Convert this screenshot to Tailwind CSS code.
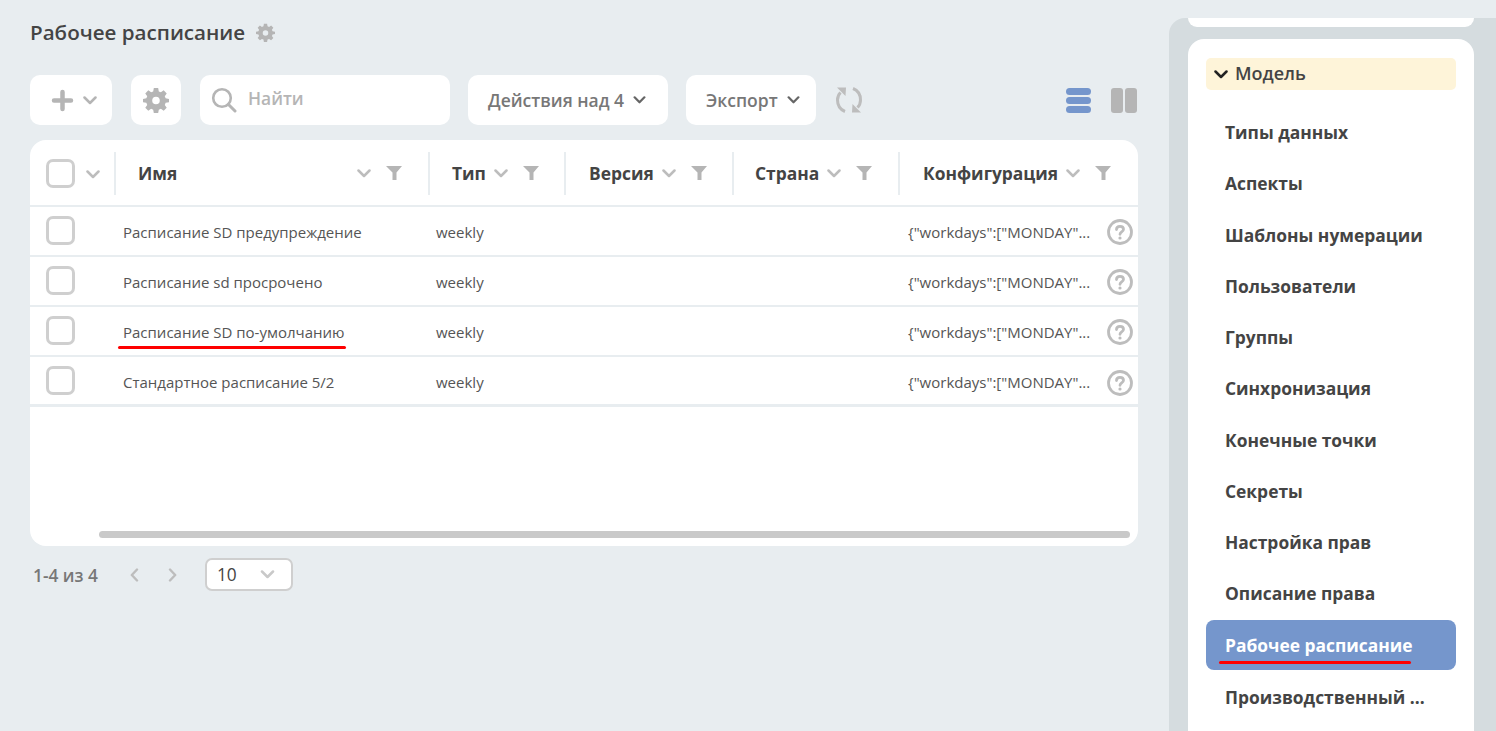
<!DOCTYPE html>
<html lang="ru">
<head>
<meta charset="utf-8">
<title>Рабочее расписание</title>
<script src="https://cdn.jsdelivr.net/npm/@tailwindcss/browser@4"></script>
</head>
<body class="bg-[#e8edf0] font-['Open_Sans',sans-serif] text-[#444] overflow-hidden">
<svg class="hidden">
  <symbol id="gear" viewBox="0 0 24 24"><path fill="currentColor" fill-rule="evenodd" d="M10 1h4l.6 3.1 1.9.8L19.1 3.1 21.900 5.900l-1.800 2.600.8 1.900L24 11v3l-3.100.6-.8 1.900 1.800 2.600-2.800 2.800-2.600-1.800-1.900.8L14 24h-4l-.6-3.100-1.900-.8-2.600 1.800-2.800-2.800 1.800-2.600-.8-1.900L0 14v-3l3.100-.6.8-1.900L2.100 5.900l2.800-2.800 2.600 1.800 1.900-.8zM12 9a3.500 3.500 0 1 0 0 7 3.500 3.500 0 0 0 0-7z"/></symbol>
  <symbol id="chev" viewBox="0 0 14 9"><path fill="none" stroke="currentColor" stroke-width="2.500" stroke-linecap="round" stroke-linejoin="round" d="M1.500 1.500 7 7l5.500-5.500"/></symbol>
  <symbol id="funnel" viewBox="0 0 16 14"><path fill="currentColor" d="M0 0h16l-5.500 6.500V14h-4V6.500z"/></symbol>
  <symbol id="help" viewBox="0 0 26 26"><circle cx="13" cy="13" r="11.500" fill="none" stroke="currentColor" stroke-width="2.800"/><path fill="none" stroke="currentColor" stroke-width="2.800" stroke-linecap="round" d="M9.500 10.500c0-2 1.500-3.200 3.500-3.200s3.500 1.200 3.500 3c0 2.700-3.500 2.600-3.500 5"/><circle cx="13" cy="19" r="1.600" fill="currentColor"/></symbol>
</svg>

<div class="flex h-[731px]">
  <!-- main -->
  <main class="w-[1169px] shrink-0 pl-[30px] pr-[31px]">
    <div class="flex items-center h-[64px] gap-[11px]">
      <h1 class="text-[20.600px] font-semibold leading-none text-[#444]">Рабочее расписание</h1>
      <svg class="w-[19px] h-[19px] text-[#b5b5b5]"><use href="#gear"/></svg>
    </div>

    <!-- toolbar -->
    <div class="flex items-center h-[50px] mt-[11px]">
      <button class="w-[82px] h-[50px] bg-white rounded-[10px] flex items-center pl-[21px] gap-[9px] text-[#b5b5b5]">
        <svg class="w-[23px] h-[23px]" viewBox="0 0 23 23"><path fill="none" stroke="currentColor" stroke-width="4.500" stroke-linecap="round" d="M3 11.500h17M11.500 3v17"/></svg>
        <svg class="w-[14px] h-[9px]"><use href="#chev"/></svg>
      </button>
      <button class="w-[50px] h-[50px] ml-[19px] bg-white rounded-[10px] flex items-center justify-center text-[#b5b5b5]">
        <svg class="w-[26px] h-[26px]"><use href="#gear"/></svg>
      </button>
      <div class="w-[250px] h-[50px] ml-[19px] bg-white rounded-[10px] flex items-center pl-[11px] text-[#b5b5b5]">
        <svg class="w-[26px] h-[26px]" viewBox="0 0 26 26"><circle cx="11" cy="11" r="8.800" fill="none" stroke="currentColor" stroke-width="2.600"/><path stroke="currentColor" stroke-width="3" stroke-linecap="round" d="M17.500 17.500 24 24"/></svg>
        <span class="ml-[11px] text-[17.400px] font-semibold leading-none -mt-[3px]">Найти</span>
      </div>
      <button class="w-[200px] h-[50px] ml-[18px] bg-white rounded-[10px] flex items-center pl-[20px] gap-[9px] text-[17.500px] font-semibold text-[#777]">
        <span>Действия над 4</span>
        <svg class="w-[13px] h-[8px] text-[#666]"><use href="#chev"/></svg>
      </button>
      <button class="w-[130px] h-[50px] ml-[18px] bg-white rounded-[10px] flex items-center pl-[20px] gap-[9px] text-[17.500px] font-semibold text-[#777]">
        <span>Экспорт</span>
        <svg class="w-[13px] h-[8px] text-[#666]"><use href="#chev"/></svg>
      </button>
      <svg class="w-[28px] h-[28px] ml-[19px] text-[#bdbdbd]" viewBox="0 0 28 28" fill="none" stroke="currentColor" stroke-width="3"><path d="M10 25.500C5 23.500 2.500 19 2.500 14c0-3 1-5.500 3-7.500"/><path d="M18 2.500c5 2 7.500 6.500 7.500 11.500 0 3-1 5.500-3 7.500"/><path fill="currentColor" stroke="none" d="M2 1.500h9L10.500 10zM26 26.500h-9l.5-8.500z"/></svg>
      <div class="ml-auto mr-[1px] flex items-center">
        <div class="flex flex-col gap-[2px] w-[25px]">
          <div class="h-[7px] rounded-full bg-[#7596cc]"></div>
          <div class="h-[7px] rounded-full bg-[#7596cc]"></div>
          <div class="h-[7px] rounded-full bg-[#7596cc]"></div>
        </div>
        <div class="flex gap-[2px] ml-[20px]">
          <div class="w-[12px] h-[25px] rounded-[3px] bg-[#b5b5b5]"></div>
          <div class="w-[12px] h-[25px] rounded-[3px] bg-[#b5b5b5]"></div>
        </div>
      </div>
    </div>

    <!-- table card -->
    <div class="relative mt-[15px] h-[406px] bg-white rounded-[16px] overflow-hidden">
      <div class="grid grid-cols-[86px_314px_136px_168px_166px_238px] h-[67px] pt-[1px] border-b-2 border-[#e8edf0] items-center text-[17.400px] font-bold text-[#444]">
        <div class="flex items-center h-[43px] pl-[16px] border-r-2 border-[#e8edf0]">
          <span class="w-[29px] h-[29px] rounded-[7px] border-[3px] border-[#cfcfcf]"></span>
          <svg class="w-[14px] h-[9px] ml-[11px] mt-[2px] text-[#bdbdbd]"><use href="#chev"/></svg>
        </div>
        <div class="flex items-center h-[43px] pl-[22px] pr-[26px] border-r-2 border-[#e8edf0]">
          <span>Имя</span>
          <svg class="w-[14px] h-[9px] ml-auto text-[#bdbdbd]"><use href="#chev"/></svg>
          <svg class="w-[16px] h-[14px] ml-[15px] text-[#b5b5b5]"><use href="#funnel"/></svg>
        </div>
        <div class="flex items-center h-[43px] pl-[22px] border-r-2 border-[#e8edf0]">
          <span>Тип</span>
          <svg class="w-[14px] h-[9px] ml-[8px] text-[#bdbdbd]"><use href="#chev"/></svg>
          <svg class="w-[16px] h-[14px] ml-[15px] text-[#b5b5b5]"><use href="#funnel"/></svg>
        </div>
        <div class="flex items-center h-[43px] pl-[23px] border-r-2 border-[#e8edf0]">
          <span>Версия</span>
          <svg class="w-[14px] h-[9px] ml-[8px] text-[#bdbdbd]"><use href="#chev"/></svg>
          <svg class="w-[16px] h-[14px] ml-[15px] text-[#b5b5b5]"><use href="#funnel"/></svg>
        </div>
        <div class="flex items-center h-[43px] pl-[21px] border-r-2 border-[#e8edf0]">
          <span>Страна</span>
          <svg class="w-[14px] h-[9px] ml-[8px] text-[#bdbdbd]"><use href="#chev"/></svg>
          <svg class="w-[16px] h-[14px] ml-[15px] text-[#b5b5b5]"><use href="#funnel"/></svg>
        </div>
        <div class="flex items-center h-[43px] pl-[23px]">
          <span>Конфигурация</span>
          <svg class="w-[14px] h-[9px] ml-[8px] text-[#bdbdbd]"><use href="#chev"/></svg>
          <svg class="w-[16px] h-[14px] ml-[15px] text-[#b5b5b5]"><use href="#funnel"/></svg>
        </div>
      </div>

      <div class="grid grid-cols-[93px_313px_472px_1fr] h-[50px] pt-[2px] border-b-2 border-[#e8edf0] items-center text-[15px] text-[#555]">
        <span class="ml-[16px] -mt-[3px] w-[29px] h-[29px] rounded-[7px] border-[3px] border-[#cfcfcf]"></span>
        <span>Расписание SD предупреждение</span>
        <span>weekly</span>
        <div class="flex items-center justify-between pr-[5px]"><span>{"workdays":["MONDAY"...</span><svg class="w-[26px] h-[26px] text-[#bdbdbd]"><use href="#help"/></svg></div>
      </div>
      <div class="grid grid-cols-[93px_313px_472px_1fr] h-[50px] pt-[2px] border-b-2 border-[#e8edf0] items-center text-[15px] text-[#555]">
        <span class="ml-[16px] -mt-[3px] w-[29px] h-[29px] rounded-[7px] border-[3px] border-[#cfcfcf]"></span>
        <span>Расписание sd просрочено</span>
        <span>weekly</span>
        <div class="flex items-center justify-between pr-[5px]"><span>{"workdays":["MONDAY"...</span><svg class="w-[26px] h-[26px] text-[#bdbdbd]"><use href="#help"/></svg></div>
      </div>
      <div class="grid grid-cols-[93px_313px_472px_1fr] h-[50px] pt-[2px] border-b-2 border-[#e8edf0] items-center text-[15px] text-[#555]">
        <span class="ml-[16px] -mt-[3px] w-[29px] h-[29px] rounded-[7px] border-[3px] border-[#cfcfcf]"></span>
        <span class="relative">Расписание SD по-умолчанию<i class="absolute left-[-5px] top-[25px] w-[228px] h-[3px] rounded-full bg-[#fe0000]"></i></span>
        <span>weekly</span>
        <div class="flex items-center justify-between pr-[5px]"><span>{"workdays":["MONDAY"...</span><svg class="w-[26px] h-[26px] text-[#bdbdbd]"><use href="#help"/></svg></div>
      </div>
      <div class="grid grid-cols-[93px_313px_472px_1fr] h-[50px] pt-[4px] border-b-[3px] border-[#e8edf0] items-center text-[15px] text-[#555]">
        <span class="ml-[16px] -mt-[5px] w-[29px] h-[29px] rounded-[7px] border-[3px] border-[#cfcfcf]"></span>
        <span>Стандартное расписание 5/2</span>
        <span>weekly</span>
        <div class="flex items-center justify-between pr-[5px]"><span>{"workdays":["MONDAY"...</span><svg class="w-[26px] h-[26px] text-[#bdbdbd]"><use href="#help"/></svg></div>
      </div>

      <!-- horizontal scrollbar -->
      <div class="absolute left-[69px] right-[8px] bottom-[8px] h-[7px] rounded-full bg-[#c9c9c9]"></div>
    </div>

    <!-- pagination -->
    <div class="flex items-center h-[32px] mt-[12px] text-[#777]">
      <span class="ml-[3px] mt-[3px] text-[17.300px] font-semibold">1-4 из 4</span>
      <svg class="w-[9px] h-[14px] ml-[32px] mt-[2px] text-[#bdbdbd]" viewBox="0 0 9 14"><path fill="none" stroke="currentColor" stroke-width="2.400" stroke-linecap="round" stroke-linejoin="round" d="M7 1.500 1.800 7 7 12.500"/></svg>
      <svg class="w-[9px] h-[14px] ml-[29px] mt-[2px] text-[#bdbdbd]" viewBox="0 0 9 14"><path fill="none" stroke="currentColor" stroke-width="2.400" stroke-linecap="round" stroke-linejoin="round" d="M2 1.500 7.200 7 2 12.500"/></svg>
      <div class="w-[88px] h-[33px] ml-[28px] bg-white rounded-[7px] border-2 border-[#cfcfcf] flex items-center pl-[10px] text-[17.300px] text-[#444]">
        <span class="mt-[1px]">10</span>
        <svg class="w-[15px] h-[9px] ml-auto mr-[16px] mt-[1px] text-[#c9c9c9]"><use href="#chev"/></svg>
      </div>
    </div>
  </main>

  <!-- sidebar -->
  <aside class="w-[327px] h-[713px] mt-[18px] pl-[19px] bg-[#d5dcdf] rounded-tl-[16px] overflow-hidden">
    <div class="w-[286px] h-[9px] bg-white rounded-b-[14px]"></div>
    <nav class="relative w-[286px] h-[720px] mt-[12px] pt-[19px] px-[18px] bg-white rounded-t-[16px] text-[17.400px] font-bold text-[#444]">
      <div class="flex items-center h-[32px] bg-[#fef4d9] rounded-[5px] pl-[8px] gap-[7px]">
        <svg class="w-[14px] h-[9px] text-[#222]"><use href="#chev"/></svg>
        <span class="text-[18px] font-semibold -mt-[2px]">Модель</span>
      </div>
      <ul class="mt-[16.500px] flex flex-col">
        <li class="h-[51.250px] pl-[19px] flex items-center">Типы данных</li>
        <li class="h-[51.250px] pl-[19px] flex items-center">Аспекты</li>
        <li class="h-[51.250px] pl-[19px] flex items-center">Шаблоны нумерации</li>
        <li class="h-[51.250px] pl-[19px] flex items-center">Пользователи</li>
        <li class="h-[51.250px] pl-[19px] flex items-center">Группы</li>
        <li class="h-[51.250px] pl-[19px] flex items-center">Синхронизация</li>
        <li class="h-[51.250px] pl-[19px] flex items-center">Конечные точки</li>
        <li class="h-[51.250px] pl-[19px] flex items-center">Секреты</li>
        <li class="h-[51.250px] pl-[19px] flex items-center">Настройка прав</li>
        <li class="h-[51.250px] pl-[19px] flex items-center">Описание права</li>
        <li class="relative mt-[1px] h-[50px] pl-[19px] flex items-center bg-[#7596cc] rounded-[8px] text-white">Рабочее расписание<i class="absolute left-[13px] top-[41px] w-[192px] h-[3px] rounded-full bg-[#fe0000]"></i></li>
        <li class="h-[54px] pl-[19px] flex items-center">Производственный ...</li>
      </ul>
    </nav>
  </aside>
</div>
</body>
</html>
